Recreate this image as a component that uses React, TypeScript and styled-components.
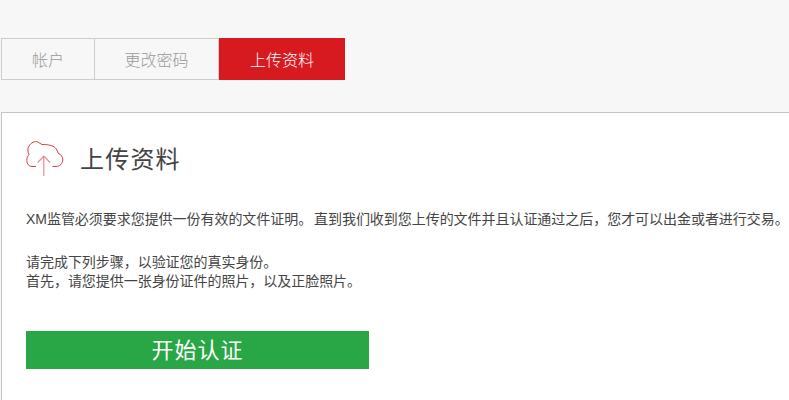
import { createGlobalStyle } from 'styled-components';
import styled from 'styled-components';

const GlobalStyle = createGlobalStyle`
  html, body {
    margin: 0;
    padding: 0;
    height: 100%;
    overflow: hidden;
    background: #f7f7f7;
  }
  body {
    font-family: "Liberation Sans", "Noto Sans CJK SC", sans-serif;
  }
`;

const Page = styled.div`
  width: 789px;
  height: 400px;
  padding: 38px 0 0 1px;
  box-sizing: border-box;
  overflow: hidden;
`;

const Tabs = styled.div`
  display: flex;
  height: 42px;
`;

const Tab = styled.div<{ $width: number; $active?: boolean }>`
  width: ${(p) => p.$width}px;
  box-sizing: border-box;
  display: flex;
  align-items: center;
  justify-content: center;
  font-size: 16px;
  font-weight: 300;
  color: ${(p) => (p.$active ? '#fff' : '#999')};
  background: ${(p) => (p.$active ? '#d71920' : '#f7f7f7')};
  border: ${(p) => (p.$active ? 'none' : '1px solid #ccc')};
  & + & {
    border-left: none;
  }
`;

const Panel = styled.div`
  margin-top: 32px;
  width: 788px;
  height: 320px;
  box-sizing: border-box;
  background: #fff;
  border: 1px solid #c4c4c4;
  border-right: none;
  padding: 26px 0 26px 24px;
`;

const TitleRow = styled.div`
  display: flex;
  align-items: flex-start;
  gap: 16px;
  height: 42px;
`;

const Title = styled.h2`
  margin: 0;
  font-size: 24px;
  line-height: 42px;
  font-weight: 400;
  letter-spacing: 1.2px;
  color: #444;
`;

const IconSlot = styled.div`
  height: 38px;
  margin-top: 2px;
`;

const Paragraph = styled.p<{ $top: number }>`
  margin: ${(p) => p.$top}px 0 0;
  font-size: 14px;
  line-height: 19px;
  letter-spacing: -0.04px;
  word-spacing: -2px;
  color: #444;
  white-space: nowrap;
`;

const StartButton = styled.button`
  display: block;
  margin-top: 40px;
  width: 343px;
  height: 38px;
  padding: 0 0 4px;
  border: none;
  background: #29a645;
  color: #fff;
  font-family: inherit;
  font-size: 22px;
  letter-spacing: 1px;
`;

const CloudIcon = () => (
  <svg width="38" height="38" viewBox="0 0 38 38" fill="none" display="block">
    <path
      d="M10 25.5 H6 C3 25.5 1 23 0.8 19.5 C0.6 16.5 2 15 3 13.5 C1.5 11 1.5 7 3 5 C5 1.5 9 0 11.5 0.8 C13 1.5 14.5 3 16 3.5 C19 3.5 22 3.5 24.5 4.5 C28 5 31 7.5 32 12 C35 13.5 37 16 36.8 19 C36.5 23 33.5 25.5 30 25.5 H26.5"
      stroke="#d71920"
      strokeOpacity="0.85"
      strokeWidth="1"
    />
    <path d="M17.8 35 V15.5 M11.7 21.5 L17.8 15.2 L24 21.5" stroke="#ee8b90" strokeWidth="1.2" />
  </svg>
);

export default function App() {
  return (
    <>
      <GlobalStyle />
      <Page>
        <Tabs>
          <Tab $width={94}>帐户</Tab>
          <Tab $width={124}>更改密码</Tab>
          <Tab $width={126} $active>上传资料</Tab>
        </Tabs>
        <Panel>
          <TitleRow>
            <IconSlot>
              <CloudIcon />
            </IconSlot>
            <Title>上传资料</Title>
          </TitleRow>
          <Paragraph $top={29}>
            XM监管必须要求您提供一份有效的文件证明。 直到我们收到您上传的文件并且认证通过之后，您才可以出金或者进行交易。
          </Paragraph>
          <Paragraph $top={24}>
            请完成下列步骤，以验证您的真实身份。
            <br />
            首先，请您提供一张身份证件的照片，以及正脸照片。
          </Paragraph>
          <StartButton>开始认证</StartButton>
        </Panel>
      </Page>
    </>
  );
}
